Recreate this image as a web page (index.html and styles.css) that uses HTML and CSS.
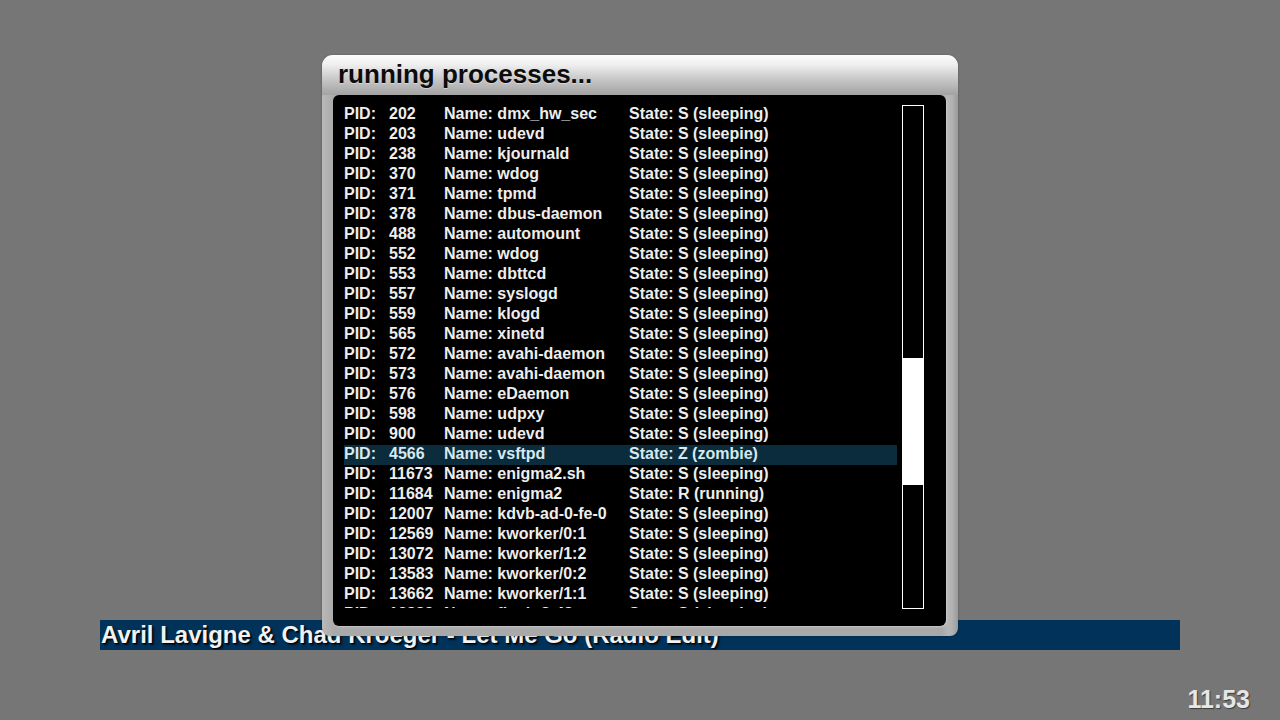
FILE: index.html
```html
<!DOCTYPE html>
<html>
<head>
<meta charset="utf-8">
<link rel="stylesheet" href="styles.css">
</head>
<body>
<div class="screen">
  <div class="songbar"><span class="songtext">Avril Lavigne &amp; Chad Kroeger - Let Me Go (Radio Edit)</span></div>
  <div class="clock">11:53</div>

  <div class="window">
    <div class="titlebar">running processes...</div>
    <div class="panel">
      <div class="list">
        <div class="row"><span class="c1">PID:</span><span class="c2">202</span><span class="c3">Name: dmx_hw_sec</span><span class="c4">State: S (sleeping)</span></div>
        <div class="row"><span class="c1">PID:</span><span class="c2">203</span><span class="c3">Name: udevd</span><span class="c4">State: S (sleeping)</span></div>
        <div class="row"><span class="c1">PID:</span><span class="c2">238</span><span class="c3">Name: kjournald</span><span class="c4">State: S (sleeping)</span></div>
        <div class="row"><span class="c1">PID:</span><span class="c2">370</span><span class="c3">Name: wdog</span><span class="c4">State: S (sleeping)</span></div>
        <div class="row"><span class="c1">PID:</span><span class="c2">371</span><span class="c3">Name: tpmd</span><span class="c4">State: S (sleeping)</span></div>
        <div class="row"><span class="c1">PID:</span><span class="c2">378</span><span class="c3">Name: dbus-daemon</span><span class="c4">State: S (sleeping)</span></div>
        <div class="row"><span class="c1">PID:</span><span class="c2">488</span><span class="c3">Name: automount</span><span class="c4">State: S (sleeping)</span></div>
        <div class="row"><span class="c1">PID:</span><span class="c2">552</span><span class="c3">Name: wdog</span><span class="c4">State: S (sleeping)</span></div>
        <div class="row"><span class="c1">PID:</span><span class="c2">553</span><span class="c3">Name: dbttcd</span><span class="c4">State: S (sleeping)</span></div>
        <div class="row"><span class="c1">PID:</span><span class="c2">557</span><span class="c3">Name: syslogd</span><span class="c4">State: S (sleeping)</span></div>
        <div class="row"><span class="c1">PID:</span><span class="c2">559</span><span class="c3">Name: klogd</span><span class="c4">State: S (sleeping)</span></div>
        <div class="row"><span class="c1">PID:</span><span class="c2">565</span><span class="c3">Name: xinetd</span><span class="c4">State: S (sleeping)</span></div>
        <div class="row"><span class="c1">PID:</span><span class="c2">572</span><span class="c3">Name: avahi-daemon</span><span class="c4">State: S (sleeping)</span></div>
        <div class="row"><span class="c1">PID:</span><span class="c2">573</span><span class="c3">Name: avahi-daemon</span><span class="c4">State: S (sleeping)</span></div>
        <div class="row"><span class="c1">PID:</span><span class="c2">576</span><span class="c3">Name: eDaemon</span><span class="c4">State: S (sleeping)</span></div>
        <div class="row"><span class="c1">PID:</span><span class="c2">598</span><span class="c3">Name: udpxy</span><span class="c4">State: S (sleeping)</span></div>
        <div class="row"><span class="c1">PID:</span><span class="c2">900</span><span class="c3">Name: udevd</span><span class="c4">State: S (sleeping)</span></div>
        <div class="row selected"><span class="c1">PID:</span><span class="c2">4566</span><span class="c3">Name: vsftpd</span><span class="c4">State: Z (zombie)</span></div>
        <div class="row"><span class="c1">PID:</span><span class="c2">11673</span><span class="c3">Name: enigma2.sh</span><span class="c4">State: S (sleeping)</span></div>
        <div class="row"><span class="c1">PID:</span><span class="c2">11684</span><span class="c3">Name: enigma2</span><span class="c4">State: R (running)</span></div>
        <div class="row"><span class="c1">PID:</span><span class="c2">12007</span><span class="c3">Name: kdvb-ad-0-fe-0</span><span class="c4">State: S (sleeping)</span></div>
        <div class="row"><span class="c1">PID:</span><span class="c2">12569</span><span class="c3">Name: kworker/0:1</span><span class="c4">State: S (sleeping)</span></div>
        <div class="row"><span class="c1">PID:</span><span class="c2">13072</span><span class="c3">Name: kworker/1:2</span><span class="c4">State: S (sleeping)</span></div>
        <div class="row"><span class="c1">PID:</span><span class="c2">13583</span><span class="c3">Name: kworker/0:2</span><span class="c4">State: S (sleeping)</span></div>
        <div class="row"><span class="c1">PID:</span><span class="c2">13662</span><span class="c3">Name: kworker/1:1</span><span class="c4">State: S (sleeping)</span></div>
        <div class="row"><span class="c1">PID:</span><span class="c2">13883</span><span class="c3">Name: flush-8:48</span><span class="c4">State: S (sleeping)</span></div>
      </div>
      <div class="scrollbar"><div class="thumb"></div></div>
    </div>
  </div>
</div>
</body>
</html>
```

FILE: styles.css
```css
html, body {
  margin: 0;
  padding: 0;
}
body {
  background: #767676;
  font-family: "Liberation Sans", Arial, sans-serif;
  overflow: hidden;
}
.screen {
  position: relative;
  width: 1280px;
  height: 720px;
  padding-top: 620px;
  box-sizing: border-box;
}
.songbar {
  margin: 0 100px;
  height: 30px;
  background: #00325a;
  overflow: hidden;
  display: flex;
  align-items: center;
}
.songtext {
  padding-left: 1px;
  color: #f2f2f2;
  font-weight: bold;
  font-size: 24px;
  line-height: 30px;
  text-shadow: 1px 1px 1px #000, 2px 2px 2px rgba(0,0,0,0.6);
  white-space: nowrap;
}
.clock {
  margin-top: 34px;
  text-align: right;
  padding-right: 30px;
  color: #e6e6e6;
  font-weight: bold;
  font-size: 25px;
  line-height: 30px;
  text-shadow: 1px 1px 1px rgba(0,0,0,0.5);
}
.window {
  position: absolute;
  left: 322px;
  top: 55px;
  width: 636px;
  height: 581px;
  border-radius: 11px 11px 8px 8px;
  background: linear-gradient(90deg, #b9b9b9 0px, #a9a9a9 12px, #a9a9a9 620px, #b6b6b6 626px, #b2b2b2 630px, #9a9a9a 636px);
  box-shadow: 0 0 2px rgba(0,0,0,0.3);
  display: flex;
  flex-direction: column;
}
.titlebar {
  height: 40px;
  border-radius: 11px 11px 0 0;
  background: linear-gradient(180deg, #fdfdfd 0%, #eeeeee 25%, #c8c8c8 60%, #a2a2a2 100%);
  color: #0c0c0c;
  font-weight: bold;
  font-size: 26px;
  line-height: 39px;
  padding-left: 16px;
  text-shadow: 0 1px 0 rgba(255,255,255,0.4);
}
.panel {
  margin: 0 12px 10px 11px;
  height: 531px;
  background: #000;
  border-radius: 6px;
  box-shadow: 1px 1px 2px rgba(255,255,255,0.35);
  padding: 10px 0 0 11px;
  box-sizing: border-box;
  display: flex;
  gap: 5px;
}
.list {
  width: 553px;
  height: 503px;
  overflow: hidden;
}
.row {
  display: flex;
  height: 20px;
  line-height: 17px;
  font-size: 16px;
  font-weight: bold;
  color: #eeeeee;
  white-space: nowrap;
}
.row.selected {
  background: #0b2c3c;
  color: #d7e9f0;
}
.c1 { width: 45px; }
.c2 { width: 55px; }
.c3 { width: 185px; }
.scrollbar {
  width: 22px;
  height: 504px;
  border: 1px solid #fff;
  box-sizing: border-box;
}
.thumb {
  margin-top: 252px;
  height: 127px;
  background: #fff;
}
```
